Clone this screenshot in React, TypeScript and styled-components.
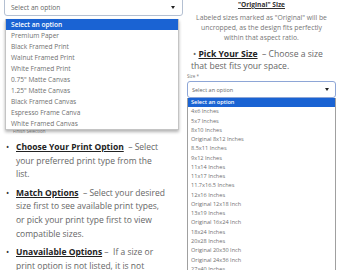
import React from "react";
import styled, { createGlobalStyle } from "styled-components";

// Data
const printOptions = [
  "Premium Paper",
  "Black Framed Print",
  "Walnut Framed Print",
  "White Framed Print",
  "0.75\" Matte Canvas",
  "1.25\" Matte Canvas",
  "Black Framed Canvas",
  "Espresso Frame Canva",
  "White Framed Canvas",
];

const sizeOptions = [
  "4x6 Inches",
  "5x7 Inches",
  "8x10 Inches",
  "Original 8x12 Inches",
  "8.5x11 Inches",
  "9x12 Inches",
  "11x14 Inches",
  "11x17 Inches",
  "11.7x16.5 Inches",
  "12x16 Inches",
  "Original 12x18 Inch",
  "13x19 Inches",
  "Original 16x24 Inch",
  "18x24 Inches",
  "20x28 Inches",
  "Original 20x30 Inch",
  "Original 24x36 Inch",
  "27x40 Inches",
  "Original 28x42 Inch",
];

// Styles
const GlobalStyle = createGlobalStyle`
  html, body {
    margin: 0;
    padding: 0;
    background: #fff;
  }
  body {
    font-family: "Open Sans", "Liberation Sans", sans-serif;
  }
`;

const Page = styled.div`
  width: 340px;
  height: 270px;
  overflow: hidden;
  display: flex;
  align-items: flex-start;
  background: #fff;
`;

const LeftCol = styled.div`
  width: 183px;
  flex: none;
  padding-left: 4px;
  box-sizing: border-box;
  display: flex;
  flex-direction: column;

  & > * {
    flex-shrink: 0;
  }
`;

const RightCol = styled.div`
  flex: 1;
  padding: 0 4px;
  display: flex;
  flex-direction: column;

  & > * {
    flex-shrink: 0;
  }
`;

const SelectBox = styled.div<{ $small?: boolean }>`
  display: flex;
  align-items: center;
  justify-content: space-between;
  box-sizing: border-box;
  height: ${({ $small }) => ($small ? "17px" : "19px")};
  margin-top: ${({ $small }) => ($small ? "2px" : "-3px")};
  padding: ${({ $small }) => ($small ? "0 6px 0 4px" : "2px 7px 0 6px")};
  border: 1px solid ${({ $small }) => ($small ? "#8ea6d6" : "#b4c0d2")};
  border-radius: 3px;
  font-size: ${({ $small }) => ($small ? "5.5px" : "6.6px")};
  color: #666;
`;

const Arrow = styled.span`
  width: 0;
  height: 0;
  border-left: 2.5px solid transparent;
  border-right: 2.5px solid transparent;
  border-top: 3px solid #222;
`;

const ListBox = styled.div<{ $small?: boolean }>`
  box-sizing: border-box;
  background: #fff;
  margin-top: ${({ $small }) => ($small ? "0" : "3px")};
  margin-left: ${({ $small }) => ($small ? "0" : "1px")};
  width: ${({ $small }) => ($small ? "149px" : "174px")};
  border: 1px solid ${({ $small }) => ($small ? "#a0a0a0" : "#c4c4c4")};
  border-top: none;
  box-shadow: ${({ $small }) =>
    $small ? "none" : "0 2px 3px rgba(0, 0, 0, 0.3)"};
  position: relative;
  z-index: 2;
`;

const Option = styled.div<{ $small?: boolean; $active?: boolean }>`
  height: ${({ $small }) => ($small ? "9.28px" : "11px")};
  line-height: ${({ $small }) => ($small ? "9.28px" : "11px")};
  padding-left: ${({ $small }) => ($small ? "3px" : "5px")};
  font-size: ${({ $small }) => ($small ? "5.6px" : "6.6px")};
  white-space: nowrap;
  color: ${({ $active }) => ($active ? "#fff" : "#707070")};
  background: ${({ $active }) => ($active ? "#1a63d3" : "transparent")};
  font-weight: ${({ $active }) => ($active ? 600 : 400)};
`;

const TinyLabel = styled.div`
  font-size: 4.5px;
  line-height: 6px;
  color: #888;
  margin: -2px 0 0 9px;
`;

const Bullets = styled.div`
  margin-top: 6px;
  display: flex;
  flex-direction: column;
  gap: 5px;
`;

const Item = styled.div`
  display: flex;
  font-size: 8.5px;
  line-height: 13.6px;
  color: #666;
  white-space: nowrap;
`;

const Dot = styled.span`
  width: 12px;
  flex: none;
  padding-left: 2px;
  box-sizing: border-box;
  color: #333;
`;

const Strong = styled.span`
  font-weight: 700;
  color: #222;
  text-decoration: underline;
  text-underline-offset: 1px;
`;

const Heading = styled.div`
  text-align: center;
  font-size: 6.6px;
  line-height: 10px;
  font-weight: 700;
  color: #333;
  text-decoration: underline;
`;

const Note = styled.div`
  margin-top: 3px;
  text-align: center;
  font-size: 6.8px;
  line-height: 10px;
  color: #777;
`;

const PickText = styled.div`
  margin-top: 5px;
  padding-left: 6px;
  font-size: 8.6px;
  line-height: 12px;
  color: #666;
  white-space: nowrap;
`;

const Indent = styled.span`
  display: inline-block;
  margin-left: -2px;
`;

const FieldLabel = styled.div`
  margin-top: 1px;
  font-size: 4.5px;
  line-height: 6px;
  color: #777;
`;

const App: React.FC = () => {
  return (
    <>
      <GlobalStyle />
      <Page>
        <LeftCol>
          <SelectBox>
            <span>Select an option</span>
            <Arrow />
          </SelectBox>
          <ListBox>
            <Option $active>Select an option</Option>
            {printOptions.map((o) => (
              <Option key={o}>{o}</Option>
            ))}
          </ListBox>
          <TinyLabel>Finish Selection</TinyLabel>
          <Bullets>
            <Item>
              <Dot>•</Dot>
              <div>
                <Strong>Choose Your Print Option</Strong>&nbsp; – Select
                <br />
                your preferred print type from the
                <br />
                list.
              </div>
            </Item>
            <Item>
              <Dot>•</Dot>
              <div>
                <Strong>Match Options</Strong>&nbsp; – Select your desired
                <br />
                size first to see available print types,
                <br />
                or pick your print type first to view
                <br />
                compatible sizes.
              </div>
            </Item>
            <Item>
              <Dot>•</Dot>
              <div>
                <Strong>Unavailable Options</Strong> – &nbsp;If a size or
                <br />
                print option is not listed, it is not
                <br />
                available for that combination.
              </div>
            </Item>
          </Bullets>
        </LeftCol>
        <RightCol>
          <Heading>"Original" Size</Heading>
          <Note>
            Labeled sizes marked as "Original" will be
            <br />
            uncropped, as the design fits perfectly
            <br />
            within that aspect ratio.
          </Note>
          <PickText>
            • <Strong>Pick Your Size</Strong>&nbsp; – Choose a size
            <br />
            <Indent>that best fits your space.</Indent>
          </PickText>
          <FieldLabel>Size *</FieldLabel>
          <SelectBox $small>
            <span>Select an option</span>
            <Arrow />
          </SelectBox>
          <ListBox $small>
            <Option $small $active>
              Select an option
            </Option>
            {sizeOptions.map((o) => (
              <Option $small key={o}>
                {o}
              </Option>
            ))}
          </ListBox>
        </RightCol>
      </Page>
    </>
  );
};

export default App;
